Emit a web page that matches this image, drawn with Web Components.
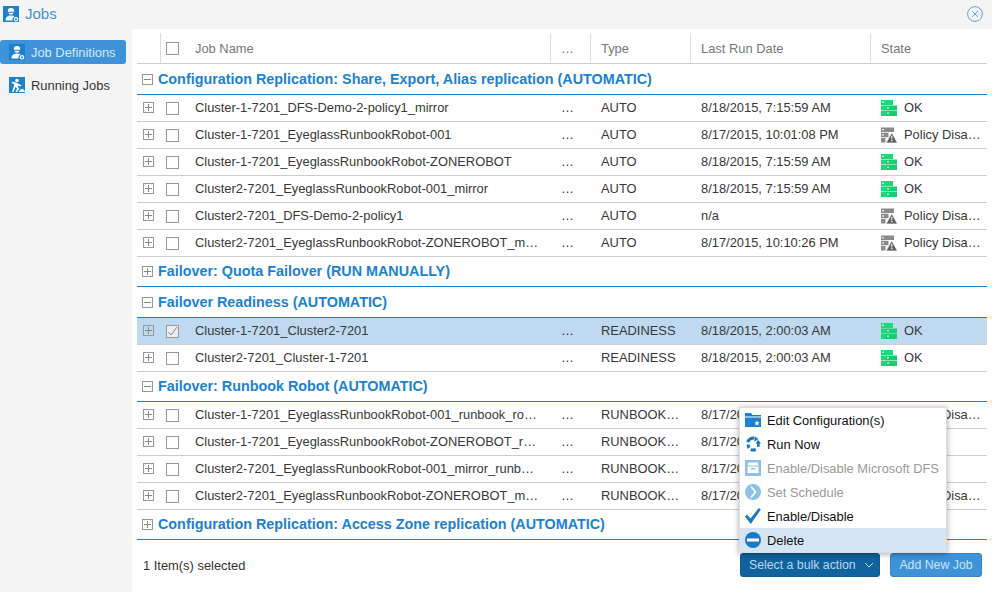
<!DOCTYPE html>
<html><head><meta charset="utf-8"><title>Jobs</title>
<style>
html,body{margin:0;padding:0;height:100%;overflow:hidden}
body{font-family:"Liberation Sans",Arial,sans-serif;font-size:12.9px;color:#333;background:#f4f4f4;--cols:23px 27px 363px 40px 100px 180px 117px}
</style></head><body>
<job-app></job-app>
<script>
const ICONS={
 worker:`<svg viewBox="0 0 16 16" width="16" height="16"><rect width="16" height="16" fill="currentColor"/><path fill="#fff" d="M4.800 5.300a3.200 3.200 0 0 1 6.400 0v.5H4.800zM5.300 6.700h5.400a2.800 2.800 0 0 1-5.400 0zM2.500 14.500c0-3.300 2-4.900 5.500-4.900 1.500 0 2.800.3 3.700.9A3.300 3.300 0 0 0 9.600 14.500z"/><circle cx="13" cy="13.300" r="1.700" fill="none" stroke="#fff" stroke-width="1.200"/></svg>`,
 digger:`<svg viewBox="0 0 16 16" width="16" height="16"><rect width="16" height="16" fill="#1b82d2"/><circle cx="8" cy="3.500" r="1.800" fill="#fff"/><path fill="#fff" d="M3 4.500 7.500 5.800 10 7l2.500 1.500-.6 1L9 8.500l.3 2 1 1L8 15H6.500l1.500-3.300L6.500 10 4.500 15H3l2.300-7.500L2.600 5.500z"/><path fill="#fff" d="M10 15c.4-2 1.500-3 3-3s2.600 1 3 3z"/></svg>`,
 ok:`<svg viewBox="0 0 16 16" width="16" height="16"><path fill="#1cd878" d="M0 0h12v5H0zM0 5.500h5v5H0zM0 11h5v5H0z"/><path fill="#12d070" d="M5 5.500h11v5H5zM5 11h11v5H5z"/><path fill="#b8f3d3" d="M1 1.500h2V3H1zM6 7h2v1.500H6zM6 12.500h2V14H6z"/></svg>`,
 warn:`<svg viewBox="0 0 16 16" width="16" height="16"><path fill="#8a8a8a" d="M0 .5h13v4.500H0zM0 5.700h7.500v4.500H0zM0 10.900h4.500v4.600H0z"/><path fill="#e2e2e2" d="M1 2h2v1.500H1zM1 7.200h2v1.500H1z"/><path fill="#606060" stroke="#fff" stroke-width=".7" stroke-linejoin="round" d="M10.800 5.500 16.500 16H5z"/><path fill="#fff" d="M10.200 8.800h1.200l-.2 3.600h-.8zM10.200 13h1.200v1.200h-1.200z"/></svg>`,
 folder:`<svg viewBox="0 0 16 16" width="16" height="16"><path fill="#1b82d2" d="M0 1h6l1.500 2H16v1.500H0zM0 5.500h16V15H0z"/><path fill="#fff" d="m12 8.500.8 1.700 1.800.2-1.300 1.200.4 1.800-1.700-.9-1.700.9.400-1.800-1.300-1.200 1.800-.2z"/></svg>`,
 run:`<svg viewBox="0 0 16 16" width="16" height="16"><g fill="none" stroke="#1b78c4" stroke-width="3.200"><path d="M2.700 6.200A5.800 5.800 0 0 1 9 2.200"/><path d="M3.200 8.500a5.800 5.800 0 0 0 .9 3.300"/><path d="M5.800 13.300a5.800 5.800 0 0 0 5 .2"/></g><path fill="#1b78c4" d="m9.500 .2 4 2.900-4 2.700zM12 10.800h2.700V7.500H16L13.200 3.800 10.500 7.500H12z"/></svg>`,
 archive:`<svg viewBox="0 0 16 16" width="16" height="16"><rect width="16" height="16" fill="#8fc1e8"/><path fill="#fff" d="M3.500 2.500h9l1 3h-11zM2.500 6.500h11V13h-11z"/><rect x="6" y="8" width="4" height="1.500" fill="#8fc1e8"/></svg>`,
 next:`<svg viewBox="0 0 16 16" width="16" height="16"><circle cx="8" cy="8" r="8" fill="#8fc1e8"/><path fill="none" stroke="#fff" stroke-width="1.500" d="m6 2.500 4.500 5.500L6 13.500"/></svg>`,
 check:`<svg viewBox="0 0 16 16" width="16" height="16"><path fill="#1b78c4" d="m0 8.500 2-2 3.500 4L13.800 0l2 1.500L5.800 16z"/></svg>`,
 del:`<svg viewBox="0 0 16 16" width="16" height="16"><circle cx="8" cy="8" r="8" fill="#1b78c4"/><rect x="2" y="6.500" width="12" height="3" fill="#fff"/></svg>`
};
function def(name,css,html){
 customElements.define(name,class extends HTMLElement{
  connectedCallback(){
   if(this.shadowRoot)return;
   const r=this.attachShadow({mode:'open'});
   r.innerHTML=`<style>${css}</style>`+(typeof html==='function'?html(this):html);
  }
 });
}
def('exp-box',`:host{display:inline-block;box-sizing:border-box;width:11px;height:11px;border:1px solid #999;position:relative;flex:none}
 i{position:absolute;background:#888}
 .h{left:1px;right:1px;top:4px;height:1px}.v{top:1px;bottom:1px;left:4px;width:1px}`,
 e=>`<i class="h"></i>${e.hasAttribute('open')?'':'<i class="v"></i>'}`);
def('check-box',`:host{display:inline-block;box-sizing:border-box;width:13px;height:13px;border:1px solid #999;background:#fff;position:relative;flex:none}
 :host([checked]){background:#e8eef2}
 svg{position:absolute;left:0;top:0}`,
 e=>e.hasAttribute('checked')?`<svg width="11" height="11" viewBox="0 0 11 11"><path d="M1.500 6 4 9l6-8" fill="none" stroke="#888" stroke-width="1"/></svg>`:'');
def('head-row',`:host{display:grid;grid-template-columns:var(--cols);height:31px;box-sizing:border-box;border-bottom:1px solid #ccc;color:#777;align-items:center;margin-top:4px}
 div{height:30px;display:flex;align-items:center;border-left:1px solid #ddd;padding-left:10px;box-sizing:border-box;white-space:nowrap;overflow:hidden}
 .a{border:0}.b{padding-left:5px}.c{border:0;padding-left:8px}`,
 `<div class="a"></div><div class="b"><check-box></check-box></div><div class="c">Job Name</div><div>…</div><div>Type</div><div>Last Run Date</div><div>State</div>`);
def('group-row',`:host{display:flex;align-items:center;gap:5px;height:30px;box-sizing:border-box;border-bottom:1px solid #1b82d2;padding:0 0 1px 5px;font-weight:bold;font-size:14.35px;color:#1b82d2;white-space:nowrap}
 :host([tall]){height:31px;padding-bottom:0}`,
 e=>`<exp-box ${e.hasAttribute('open')?'open':''}></exp-box><span>${e.getAttribute('label')}</span>`);
def('job-row',`:host{display:grid;grid-template-columns:var(--cols);height:27px;box-sizing:border-box;border-bottom:1px solid #ccc;align-items:center;white-space:nowrap;color:#383838}
 :host([selected]){background:#bfdaf0}
 div{overflow:hidden;text-overflow:ellipsis;padding-left:11px;box-sizing:border-box;display:flex;align-items:center;gap:7px;height:26px}
 span{overflow:hidden;text-overflow:ellipsis;margin-bottom:2px}
 .a{padding:0 0 2px 6px}.b{padding-left:6px}.c{padding-left:8px;padding-right:9px;display:block;line-height:26px}
 .t{display:block;line-height:26px;padding-right:6px}
 .s{padding-right:6px}
 svg{flex:none;width:16px;height:16px}`,
 e=>{const s=e.getAttribute('state')||'OK';return `<div class="a"><exp-box></exp-box></div><div class="b"><check-box ${e.hasAttribute('selected')?'checked':''}></check-box></div><div class="c">${e.getAttribute('name')}</div><div class="t">…</div><div class="t">${e.getAttribute('type')}</div><div class="t">${e.getAttribute('date')}</div><div class="s">${s==='OK'?ICONS.ok:ICONS.warn}<span>${s==='OK'?'OK':'Policy Disabled'}</span></div>`});
def('nav-item',`:host{display:flex;align-items:center;gap:6px;height:24px;box-sizing:border-box;padding-left:9px;border-radius:3px;color:#333;white-space:nowrap}
 :host([active]){background:#3d92d8;color:#d6e8f7}
 svg{display:block}`,
 e=>`<span style="color:#1b82d2;display:flex">${ICONS[e.getAttribute('icon')]}</span><slot></slot>`);
def('job-sidebar',`:host{display:flex;flex-direction:column;gap:9px;width:126px;padding-top:11px;flex:none;margin-right:6px}`,`<slot></slot>`);
def('title-bar',`:host{display:flex;align-items:center;height:29px;box-sizing:border-box;padding:0 9px 2px 3px;gap:6px;color:#3d92d8;font-size:15px}
 span{flex:1}.i{display:flex;color:#1b82d2}`,
 `<div class="i">${ICONS.worker}</div><span><slot></slot></span><svg width="16" height="16" viewBox="0 0 16 16"><circle cx="8" cy="8" r="7.400" fill="none" stroke="#5ba4de"/><path d="m5 5 6 6M11 5l-6 6" stroke="#5ba4de"/></svg>`);
def('menu-item',`:host{display:flex;align-items:center;gap:6px;height:24px;padding-left:5px;padding-right:6px;color:#111;white-space:nowrap}
 :host([disabled]){color:#999}
 :host([hot]){background:#d5e5f3}
 svg{display:block;flex:none}`,
 e=>`${ICONS[e.getAttribute('icon')]}<slot></slot>`);
def('bulk-menu',`:host{position:absolute;right:45px;bottom:39px;display:block;background:#fff;border:1px solid #ddd;box-shadow:0 1px 6px rgba(0,0,0,.35);font-size:12.9px;width:206px;z-index:5}`,`<slot></slot>`);
def('app-btn',`:host{display:inline-flex;align-items:center;justify-content:center;gap:8px;height:24px;box-sizing:border-box;border-radius:3px;background:#3d92d8;color:#cfe3f5;font-size:12.3px;white-space:nowrap;padding:0 8px;border:1px solid #3585c8;width:92px;flex:none}
 :host([dark]){background:#0f639f;border-color:#0f5a92;color:#bcd6ea;width:140px;justify-content:flex-start}
 svg{display:block;flex:none}`,
 e=>`<slot></slot>${e.hasAttribute('dark')?'<svg width="10" height="6" viewBox="0 0 10 6"><path d="m1 1 4 4 4-4" fill="none" stroke="#d0e2f0"/></svg>':''}`);
def('job-footer',`:host{display:flex;align-items:center;height:50px;box-sizing:border-box;padding:0 5px 0 6px;gap:10px}
 span{flex:1}`,`<span><slot name="info"></slot></span><slot></slot>`);
def('job-table',`:host{display:block;flex:1;background:#fff;padding:0 5px;position:relative;min-width:0}`,`<slot></slot>`);
const rows1=[
['Cluster-1-7201_DFS-Demo-2-policy1_mirror','AUTO','8/18/2015, 7:15:59 AM','OK'],
['Cluster-1-7201_EyeglassRunbookRobot-001','AUTO','8/17/2015, 10:01:08 PM','W'],
['Cluster-1-7201_EyeglassRunbookRobot-ZONEROBOT','AUTO','8/18/2015, 7:15:59 AM','OK'],
['Cluster2-7201_EyeglassRunbookRobot-001_mirror','AUTO','8/18/2015, 7:15:59 AM','OK'],
['Cluster2-7201_DFS-Demo-2-policy1','AUTO','n/a','W'],
['Cluster2-7201_EyeglassRunbookRobot-ZONEROBOT_mirror','AUTO','8/17/2015, 10:10:26 PM','W']];
const rows2=[['Cluster-1-7201_Cluster2-7201','READINESS','8/18/2015, 2:00:03 AM','OK',1],['Cluster2-7201_Cluster-1-7201','READINESS','8/18/2015, 2:00:03 AM','OK']];
const rows3=[
['Cluster-1-7201_EyeglassRunbookRobot-001_runbook_robot_job','RUNBOOK_ROBOT','8/17/2015, 7:15:59 AM','W'],
['Cluster-1-7201_EyeglassRunbookRobot-ZONEROBOT_runbook_robot','RUNBOOK_ROBOT','8/17/2015, 7:15:59 AM','OK'],
['Cluster2-7201_EyeglassRunbookRobot-001_mirror_runbook_robot','RUNBOOK_ROBOT','8/17/2015, 7:15:59 AM','OK'],
['Cluster2-7201_EyeglassRunbookRobot-ZONEROBOT_mirror_runbook_robot','RUNBOOK_ROBOT','8/17/2015, 7:15:59 AM','W']];
const r=a=>a.map(x=>`<job-row name="${x[0]}" type="${x[1]}" date="${x[2]}" state="${x[3]}" ${x[4]?'selected':''}></job-row>`).join('');
def('job-app',`:host{display:flex;flex-direction:column;width:992px;height:592px}
 .m{display:flex;flex:1;min-height:0}`,
 `<title-bar>Jobs</title-bar><div class="m"><job-sidebar><nav-item active icon="worker">Job Definitions</nav-item><nav-item icon="digger">Running Jobs</nav-item></job-sidebar>
 <job-table><head-row></head-row>
 <group-row tall open label="Configuration Replication: Share, Export, Alias replication (AUTOMATIC)"></group-row>${r(rows1)}
 <group-row label="Failover: Quota Failover (RUN MANUALLY)"></group-row>
 <group-row tall open label="Failover Readiness (AUTOMATIC)"></group-row>${r(rows2)}
 <group-row open label="Failover: Runbook Robot (AUTOMATIC)"></group-row>${r(rows3)}
 <group-row label="Configuration Replication: Access Zone replication (AUTOMATIC)"></group-row>
 <job-footer><i slot="info" style="font-style:normal">1 Item(s) selected</i><app-btn dark>Select a bulk action</app-btn><app-btn>Add New Job</app-btn></job-footer>
 <bulk-menu>
 <menu-item icon="folder">Edit Configuration(s)</menu-item>
 <menu-item icon="run">Run Now</menu-item>
 <menu-item icon="archive" disabled>Enable/Disable Microsoft DFS</menu-item>
 <menu-item icon="next" disabled>Set Schedule</menu-item>
 <menu-item icon="check">Enable/Disable</menu-item>
 <menu-item icon="del" hot>Delete</menu-item>
 </bulk-menu></job-table></div>`);
</script></body></html>
